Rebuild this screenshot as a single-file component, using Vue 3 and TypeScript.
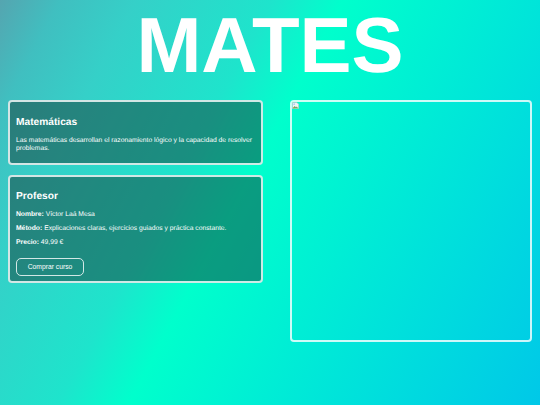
<script setup lang="ts">
const rows: { label: string; value: string }[] = [
  { label: 'Nombre:', value: 'Víctor Laá Mesa' },
  { label: 'Método:', value: 'Explicaciones claras, ejercicios guiados y práctica constante.' },
  { label: 'Precio:', value: '49,99 €' },
]
</script>

<template>
  <main class="page">
    <h1 class="title">MATES</h1>
    <div class="columns">
      <div class="left">
        <section class="card first">
          <h2>Matemáticas</h2>
          <p class="desc">Las matemáticas desarrollan el razonamiento lógico y la capacidad de resolver problemas.</p>
        </section>
        <section class="card second">
          <h2>Profesor</h2>
          <p v-for="r in rows" :key="r.label" class="row"><strong>{{ r.label }}</strong> {{ r.value }}</p>
          <button class="buy" type="button">Comprar curso</button>
        </section>
      </div>
      <div class="photo">
        <svg class="broken" width="7" height="7" viewBox="0 0 16 16" aria-hidden="true">
          <path d="M1 1H11L15 5V15H1Z" fill="#eef3f5" stroke="#b9c4c6" stroke-width="1.5" />
          <path d="M2 14L6 9L9 12L11 10L14 14Z" fill="#6fb05a" />
          <path d="M2 14L4 11.5L6 14Z" fill="#d9774a" />
          <circle cx="5" cy="5" r="2" fill="#a9cdf0" />
        </svg>
      </div>
    </div>
  </main>
</template>

<style>
html, body { margin: 0; padding: 0; }
</style>

<style scoped>
.page {
  width: 540px;
  height: 405px;
  box-sizing: border-box;
  overflow: hidden;
  background: linear-gradient(118deg, #55a5b0 0%, #40bfc0 8%, #35d0c8 18%, #1ee4cc 36%, #00ffcc 45.5%, #00c8e8 100%);
  font-family: "Liberation Sans", Arial, sans-serif;
  text-rendering: geometricPrecision;
  color: #fff;
}
.title {
  margin: 0;
  height: 100px;
  line-height: 90px;
  font-size: 78px;
  font-weight: 700;
  text-align: center;
}
.columns {
  display: flex;
  gap: 27px;
  padding: 0 8px;
  align-items: flex-start;
}
.left {
  width: 255px;
  display: flex;
  flex-direction: column;
  gap: 10px;
}
.card {
  box-sizing: border-box;
  border: 2px solid rgba(255, 255, 255, 0.8);
  border-radius: 4px;
  background: rgba(20, 50, 45, 0.48);
  padding: 0 6px;
}
.first { height: 65px; padding-top: 15px; }
.second { height: 108px; padding-top: 14px; }
h2 {
  margin: 0;
  font-size: 10.2px;
  line-height: 12px;
  font-weight: 700;
}
.desc {
  margin: 8px 0 0;
  font-size: 6.75px;
  line-height: 8px;
}
.row {
  margin: 0;
  font-size: 6.75px;
  line-height: 8px;
  margin-top: 6.4px;
}
.second h2 + .row { margin-top: 7.5px; }
.buy {
  display: block;
  box-sizing: border-box;
  margin-top: 10.5px;
  width: 68px;
  height: 18px;
  padding: 0;
  border: 1px solid rgba(255, 255, 255, 0.8);
  border-radius: 5px;
  background: transparent;
  color: #fff;
  font-family: inherit;
  font-size: 6.75px;
}
.photo {
  position: relative;
  width: 242px;
  height: 242px;
  box-sizing: border-box;
  border: 2px solid rgba(255, 255, 255, 0.8);
  border-radius: 4px;
}
.broken {
  position: absolute;
  left: 0;
  top: 0;
}
</style>
